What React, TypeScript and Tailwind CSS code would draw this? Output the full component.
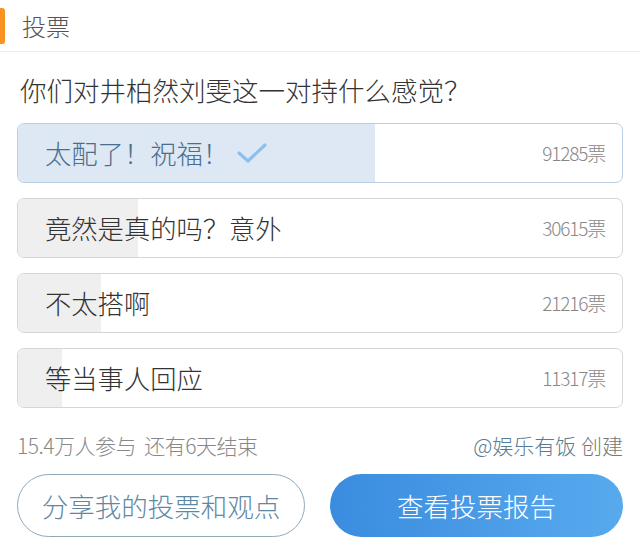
import React from 'react';

interface PollOption {
  label: string;
  votes: number;
  chosen?: boolean;
}

const options: PollOption[] = [
  { label: '太配了！祝福！', votes: 91285, chosen: true },
  { label: '竟然是真的吗？意外', votes: 30615 },
  { label: '不太搭啊', votes: 21216 },
  { label: '等当事人回应', votes: 11317 },
];

const total = options.reduce((s, o) => s + o.votes, 0);

const Check = () => (
  <svg width="30" height="22" viewBox="0 0 30 22" className="ml-[8px]">
    <path d="M2 11 L11 19 L28 3" fill="none" stroke="#8ec0ec" strokeWidth="3.2" strokeLinecap="round" strokeLinejoin="round" />
  </svg>
);

const OptionRow: React.FC<{ option: PollOption }> = ({ option }) => {
  const pct = (option.votes / total) * 100;
  return (
    <div
      className={`relative h-[60px] rounded-[7px] border overflow-hidden ${
        option.chosen ? 'border-[#b9cfe3] bg-white' : 'border-[#d6d6d6] bg-white'
      }`}
    >
      <div
        className={`absolute inset-y-0 left-0 ${option.chosen ? 'bg-[#dde8f4]' : 'bg-[#efefef]'}`}
        style={{ width: `${pct}%` }}
      ></div>
      <div className="relative h-full flex items-center justify-between pl-[27px] pr-[17px]">
        <div className="flex items-center">
          <span className={`text-[26.3px] font-light ${option.chosen ? 'text-[#4a6f8e]' : 'text-[#333]'}`}>{option.label}</span>
          {option.chosen && <Check />}
        </div>
        <span className="text-[19px] font-light text-[#888] tracking-[-1.2px]">{option.votes}票</span>
      </div>
    </div>
  );
};

export default function App() {
  return (
    <div
      className="w-[640px] h-[545px] bg-white overflow-hidden font-light"
      style={{ fontFamily: '"Noto Sans CJK SC", "Noto Sans", sans-serif' }}
    >
      <div className="h-[52px] flex items-center border-b border-[#ececec]">
        <div className="w-[5px] h-[36px] bg-[#f7931e] rounded-r-[3px]"></div>
        <span className="ml-[17px] text-[24px] text-[#555]">投票</span>
      </div>

      <div className="px-[17px]">
        <div className="pt-[20px] pl-[3px] text-[26.5px] text-[#333] leading-[36px] whitespace-nowrap">你们对井柏然刘雯这一对持什么感觉？</div>

        <div className="mt-[15px] flex flex-col gap-[15px]">
          {options.map(o => (
            <OptionRow key={o.label} option={o} />
          ))}
        </div>

        <div className="mt-[23px] flex items-center justify-between text-[21px] leading-[28px]">
          <span className="text-[#888] tracking-[-0.5px]">15.4万人参与 &nbsp;还有6天结束</span>
          <span>
            <span className="text-[#5a7b94]">@娱乐有饭</span>
            <span className="text-[#777]"> 创建</span>
          </span>
        </div>

        <div className="mt-[15px] flex gap-[25px]">
          <button className="w-[288px] h-[63px] rounded-full border border-[#8fa9ba] text-[26.5px] text-[#5e88a3] bg-white">
            分享我的投票和观点
          </button>
          <button className="flex-1 h-[63px] rounded-full bg-gradient-to-r from-[#3a8cdf] to-[#58aaee] text-[26.5px] text-white">
            查看投票报告
          </button>
        </div>
      </div>
    </div>
  );
}
